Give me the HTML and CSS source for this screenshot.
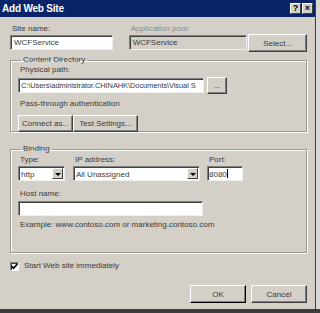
FILE: index.html
```html
<!DOCTYPE html>
<html>
<head>
<meta charset="utf-8">
<link rel="stylesheet" href="styles.css">
</head>
<body>
<div class="screen">
  <div class="dialog">
    <div class="titlebar">
      <span class="title">Add Web Site</span>
      <div class="tbtns">
        <span class="tbtn">?</span>
        <span class="tbtn close">×</span>
      </div>
    </div>
    <div class="content">
      <div class="row-top">
        <div class="field site">
          <label class="lbl">Site name:</label>
          <div class="input">WCFService</div>
        </div>
        <div class="field pool">
          <label class="lbl disabled">Application pool:</label>
          <div class="input ro">WCFService</div>
        </div>
        <div class="btn select">Select...</div>
      </div>

      <fieldset class="group content-dir">
        <legend>Content Directory</legend>
        <label class="lbl">Physical path:</label>
        <div class="path-row">
          <div class="input path">C:\Users\administrator.CHINAHK\Documents\Visual S</div>
          <div class="btn dots">...</div>
        </div>
        <div class="lbl pass">Pass-through authentication</div>
        <div class="btn-pair">
          <div class="btn connect">Connect as...</div>
          <div class="btn test">Test Settings...</div>
        </div>
      </fieldset>

      <fieldset class="group binding">
        <legend>Binding</legend>
        <div class="bind-row">
          <div class="field type">
            <label class="lbl">Type:</label>
            <div class="combo"><span class="val">http</span><span class="arrow"></span></div>
          </div>
          <div class="field ip">
            <label class="lbl">IP address:</label>
            <div class="combo"><span class="val">All Unassigned</span><span class="arrow"></span></div>
          </div>
          <div class="field port">
            <label class="lbl">Port:</label>
            <div class="input portin">8080<span class="caret"></span></div>
          </div>
        </div>
        <label class="lbl host-lbl">Host name:</label>
        <div class="input host"></div>
        <div class="lbl example">Example: www.contoso.com or marketing.contoso.com</div>
      </fieldset>

      <div class="check-row">
        <span class="checkbox"><svg width="7" height="7" viewBox="0 0 7 7"><path d="M0.5 3 L2.5 5.2 L6.5 0.8" stroke="#000" stroke-width="1.6" fill="none"/></svg></span>
        <span class="lbl">Start Web site immediately</span>
      </div>

      <div class="actions">
        <div class="btn ok">OK</div>
        <div class="btn cancel">Cancel</div>
      </div>
    </div>
  </div>
  <div class="bottom-strip"></div>
</div>
</body>
</html>
```

FILE: styles.css
```css
* { box-sizing: border-box; }
html, body { margin: 0; padding: 0; }
body {
  width: 320px;
  height: 313px;
  background: #d8d8d6;
  font-family: "Liberation Sans", Arial, sans-serif;
  font-size: 8px;
  color: #3a3a3a;
  overflow: hidden;
}
.screen { width: 320px; height: 313px; display: flex; flex-direction: column; }
.dialog {
  width: 316px;
  height: 309px;
  background: #d4d0c8;
  border-right: 1px solid #404040;
  display: flex;
  flex-direction: column;
}
.bottom-strip { height: 4px; background: #3c3c3c; }
.titlebar {
  height: 17px;
  background: #0a246a;
  display: flex;
  align-items: center;
  justify-content: space-between;
  padding: 0 2px 0 2px;
}
.title {
  color: #fff;
  font-weight: bold;
  font-size: 10px;
  letter-spacing: -0.2px;
}
.tbtns { display: flex; gap: 1px; }
.tbtn {
  width: 11px; height: 11px;
  background: #d4d0c8;
  border: 1px solid;
  border-color: #fff #404040 #404040 #fff;
  color: #000;
  font-size: 9px;
  font-weight: bold;
  line-height: 9px;
  text-align: center;
}
.content { padding: 7px 8px 0 10px; display: flex; flex-direction: column; }
.lbl { display: block; line-height: 10px; }
.disabled { color: #8a8a8a; }
.input {
  height: 15px;
  background: #fff;
  border: 1px solid;
  border-color: #808080 #f0f0f0 #f0f0f0 #808080;
  box-shadow: inset 1px 1px 0 #404040;
  padding: 2px 2px 0 3px;
  line-height: 10px;
  white-space: nowrap;
  overflow: hidden;
  color: #3a3a3a;
}
.input.ro { background: #d4d0c8; }
.row-top { display: flex; align-items: flex-end; }
.field .lbl { margin-bottom: 1px; padding-left: 2px; }
.site { width: 103px; }
.pool { width: 119px; margin-left: 16px; }
.btn {
  background: #d4d0c8;
  border: 1px solid;
  border-color: #fff #404040 #404040 #fff;
  box-shadow: inset -1px -1px 0 #808080;
  display: flex; align-items: center; justify-content: center;
  color: #3a3a3a;
}
.select { width: 59px; height: 18px; margin-left: 1px; margin-bottom: -2px; }

.group {
  margin: 0;
  border: 1px solid #9a9890;
  box-shadow: inset 1px 1px 0 #fff, 1px 1px 0 #fff;
  padding: 0 0 0 7px;
  width: 297px;
}
.group legend { padding: 0 2px; line-height: 8px; margin-left: 3px; }
.content-dir { margin-top: 6px; height: 76px; padding-top: 1px; }
.content-dir .lbl:first-of-type { padding-left: 2px; }
.path-row { display: flex; align-items: center; margin-top: 2px; }
.path { width: 186px; font-size: 7.5px; letter-spacing: -0.1px; padding-left: 2px; }
.dots { width: 20px; height: 17px; margin-left: 3px; }
.pass { margin-top: 5px; padding-left: 2px; }
.btn-pair { display: flex; margin-top: 6px; }
.connect { width: 55px; height: 17px; }
.test { width: 65px; height: 17px; }

.binding { margin-top: 13px; height: 108px; padding-top: 2px; }
.bind-row { display: flex; }
.type { width: 47px; }
.ip { width: 127px; margin-left: 8px; }
.port { width: 36px; margin-left: 7px; }
.combo {
  height: 15px;
  background: #fff;
  border: 1px solid;
  border-color: #808080 #f0f0f0 #f0f0f0 #808080;
  box-shadow: inset 1px 1px 0 #404040;
  display: flex;
  align-items: stretch;
  padding: 1px 1px 1px 2px;
}
.combo .val { flex: 1; line-height: 11px; padding-top: 1px; }
.combo .arrow {
  width: 11px;
  background: #d4d0c8;
  border: 1px solid;
  border-color: #fff #404040 #404040 #fff;
  position: relative;
}
.combo .arrow::after {
  content: "";
  position: absolute;
  left: 2px; top: 4px;
  border-left: 3px solid transparent;
  border-right: 3px solid transparent;
  border-top: 3px solid #000;
}
.portin { padding-left: 1px; }
.caret { display: inline-block; width: 1px; height: 9px; background: #000; vertical-align: -1px; }
.host-lbl { margin-top: 8px; padding-left: 2px; }
.host { width: 185px; margin-top: 2px; }
.example { margin-top: 4px; padding-left: 2px; }

.check-row { display: flex; align-items: center; margin-top: 8px; gap: 5px; }
.checkbox {
  width: 9px; height: 9px;
  background: #fff;
  border: 1px solid;
  border-color: #808080 #fff #fff #808080;
  box-shadow: inset 1px 1px 0 #404040;
  display: flex; align-items: center; justify-content: center;
}
.actions { display: flex; justify-content: flex-end; gap: 5px; margin-top: 14px; padding-right: 0px; }
.ok, .cancel { width: 56px; height: 18px; }
.ok { border-color: #fff #000 #000 #fff; }
```
